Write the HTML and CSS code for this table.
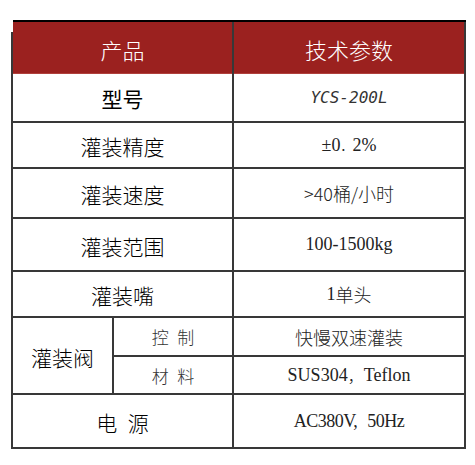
FILE: index.html
```html
<!DOCTYPE html>
<html lang="zh">
<head>
<meta charset="utf-8">
<link rel="stylesheet" href="styles.css">
</head>
<body>
<div class="sheet">
  <div class="head">
    <div class="hcell">产品</div>
    <div class="hcell">技术参数</div>
  </div>
  <div class="body">
    <div class="lab wide strong">型号</div>
    <div class="val model">YCS-200L</div>

    <div class="lab wide">灌装精度</div>
    <div class="val ser">±0<span class="dot">．</span>2%</div>

    <div class="lab wide">灌装速度</div>
    <div class="val cjk">&gt;40桶/小时</div>

    <div class="lab wide">灌装范围</div>
    <div class="val ser">100-1500kg</div>

    <div class="lab wide">灌装嘴</div>
    <div class="val cjk"><span class="ser">1</span>单头</div>

    <div class="lab tall">灌装阀</div>
    <div class="sub">控&ensp;制</div>
    <div class="val cjk">快慢双速灌装</div>
    <div class="sub">材&ensp;料</div>
    <div class="val ser">SUS304<span class="cjk">，</span>Teflon</div>

    <div class="lab wide">电&ensp;源</div>
    <div class="val ser tight">AC380V, 50Hz</div>
  </div>
</div>
</body>
</html>
```
FILE: styles.css
```css
html, body {
  margin: 0;
  padding: 0;
  background: #fff;
}
body {
  font-family: "Noto Sans CJK SC", "Noto Sans", sans-serif;
  color: #111;
}
.sheet {
  width: 455px;
  margin: 20px 0 0 11px;
}
.head {
  display: grid;
  grid-template-columns: 219px 230px;
  column-gap: 2px;
  padding: 2px 2px 0 2px;
  background:
    linear-gradient(#fff, #fff) 0 0 / 2px 12px no-repeat,
    linear-gradient(#000, #000) 0 0 / 100% 2px no-repeat,
    #383838;
}
.hcell {
  height: 52px;
  background: #9b211f;
  border-bottom: 1px solid #b0403c;
  box-sizing: border-box;
  color: #fff;
  font-size: 22px;
  font-weight: 300;
  display: flex;
  align-items: center;
  justify-content: center;
  padding-top: 3px;
}
.body {
  display: grid;
  grid-template-columns: 99px 118px 230px;
  grid-template-rows: 47px 44px 48px 51px 44px 37px 36px 52px;
  gap: 2px;
  padding: 0 2px 2px 2px;
  background: #383838;
}
.body > div {
  background: #fff;
  display: flex;
  align-items: center;
  justify-content: center;
}
.wide {
  grid-column: 1 / 3;
}
.tall {
  grid-row: 6 / 8;
}
.lab {
  font-size: 21px;
  font-weight: 300;
  color: #000;
  padding-top: 2px;
}
.strong {
  font-weight: 400;
  padding-top: 0;
}
.sub {
  font-size: 17px;
  font-weight: 300;
  color: #333;
}
.val {
  color: #222;
}
.model {
  font-family: "DejaVu Sans Mono", monospace;
  font-style: italic;
  font-size: 16px;
  color: #333;
}
.ser {
  font-family: "Liberation Serif", "Noto Sans CJK SC", serif;
  font-size: 18px;
}
.tight {
  letter-spacing: -0.5px;
  word-spacing: 6px;
}
.dot {
  font-family: "Noto Sans CJK SC", sans-serif;
  font-size: 12px;
}
.cjk {
  font-family: "Noto Sans CJK SC", sans-serif;
  font-size: 18px;
  font-weight: 300;
}
.ser .cjk {
  font-size: 16px;
}
.val.cjk .ser {
  font-size: 18px;
}
```
